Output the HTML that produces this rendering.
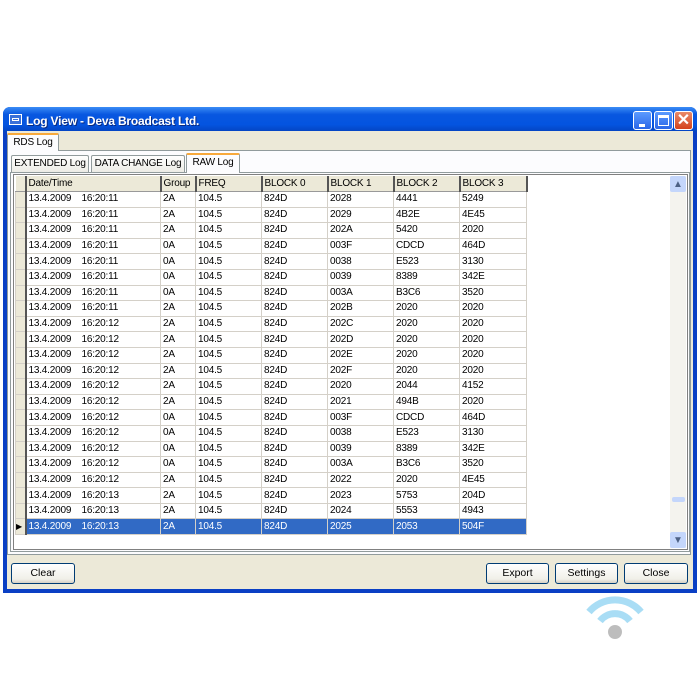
<!DOCTYPE html>
<html><head><style>
body{margin:0;width:700px;height:700px;background:#fff;position:relative;overflow:hidden;font-family:"Liberation Sans",sans-serif;font-size:11px;color:#000}
.a{position:absolute;box-sizing:border-box}
.win{left:3px;top:107px;width:694px;height:486px;background:#0a3fc4;border-radius:7px 7px 0 0}
.title{left:3px;top:107px;width:694px;height:25px;border-radius:7px 7px 0 0;background:linear-gradient(#3b8cf5,#0857e0 30%,#0454e0 70%,#0443c0)}
.body{left:7px;top:131px;width:686px;height:458px;background:#ece9d8}
.tb{color:#fff;font-weight:bold;font-size:12px;left:26px;top:114px;text-shadow:1px 1px #0a2a80;letter-spacing:-0.2px}
.btnw{top:111px;width:19px;height:19px;border:1px solid #fff;border-radius:3px;background:linear-gradient(#5b9bff,#2a66e8)}
.tab{border:1px solid #919b9c;border-bottom:none;background:linear-gradient(#fff,#ecebe5);text-align:center;padding-top:2px;border-radius:2px 2px 0 0;white-space:nowrap;font-size:10px;letter-spacing:-0.2px}
.sel{background:#fcfcfe;border-top:2px solid #f8a93b}
table{border-collapse:collapse;position:absolute;left:15px;top:176px;font-size:10px;table-layout:fixed;width:511px;letter-spacing:-0.2px}
td{border:1px solid #d4d0c8;height:14.6px;padding:0 0 0 2px;white-space:nowrap;line-height:14px;overflow:hidden}
th{background:#ece9d8;font-weight:normal;text-align:left;border-right:2px solid #555;border-bottom:1px solid #999;height:15px;padding:0 0 0 2px;line-height:15px;white-space:nowrap;overflow:hidden}
td.rh{background:#ece9d8;border-right:2px solid #555;padding:0}
tr.s td{background:#316ac5;color:#fff}
tr.s td.rh{background:#ece9d8;color:#000}
.b{top:563px;height:21px;border:1px solid #003c74;border-radius:3px;background:linear-gradient(#fff,#f0efe8 80%,#d6d0c5);text-align:center;line-height:19px;font-size:10.5px}
</style></head><body>
<div class="a win"></div>
<div class="a title"></div>
<div class="a body"></div>
<div class="a" style="left:9px;top:114px;width:13px;height:11px;border:1px solid #fff;background:#3a70d8"><div class="a" style="left:2px;top:3px;width:7px;height:3px;border:1px solid #fff"></div></div>
<div class="a tb">Log View - Deva Broadcast Ltd.</div>
<div class="a btnw" style="left:633px"><div class="a" style="left:5px;top:12px;width:6px;height:3px;background:#fff"></div></div>
<div class="a btnw" style="left:654px"><div class="a" style="left:3px;top:3px;width:11px;height:11px;border:1px solid #fff;border-top-width:3px"></div></div>
<div class="a btnw" style="left:674px;background:linear-gradient(#e88a6a,#d4421c);color:#fff;font-weight:bold;font-size:16px;text-align:center;line-height:17px">✕</div>
<div class="a" style="left:7px;top:150px;width:684px;height:405px;border:1px solid #919b9c;background:#fcfcfe"></div>
<div class="a tab sel" style="left:7px;top:133px;width:52px;height:18px">RDS Log</div>
<div class="a" style="left:10px;top:172px;width:680px;height:380px;border:1px solid #919b9c;background:#fcfcfe"></div>
<div class="a tab" style="left:11px;top:155px;width:78px;height:17px">EXTENDED Log</div>
<div class="a tab" style="left:91px;top:155px;width:94px;height:17px">DATA CHANGE Log</div>
<div class="a tab sel" style="left:186px;top:153px;width:54px;height:20px">RAW Log</div>
<div class="a" style="left:13px;top:174px;width:675px;height:376px;border:1px solid #808080;background:#fff"></div>
<div class="a" style="left:670px;top:176px;width:16px;height:372px;background:#f4f3ee"></div>
<div class="a" style="left:670px;top:176px;width:16px;height:16px;background:#c4d6fb;border-radius:2px;color:#4d6185;font-size:10px;text-align:center;line-height:17px">▲</div>
<div class="a" style="left:670px;top:532px;width:16px;height:16px;background:#c4d6fb;border-radius:2px;color:#4d6185;font-size:10px;text-align:center;line-height:17px">▼</div>
<div class="a" style="left:672px;top:497px;width:13px;height:5px;background:#c4d6fb;border-radius:2px"></div>
<table>
<colgroup><col style="width:10px"><col style="width:135px"><col style="width:35px"><col style="width:66px"><col style="width:66px"><col style="width:66px"><col style="width:66px"><col style="width:67px"></colgroup>
<tr><th style="padding:0"></th><th>Date/Time</th><th>Group</th><th>FREQ</th><th>BLOCK 0</th><th>BLOCK 1</th><th>BLOCK 2</th><th>BLOCK 3</th></tr>
<tr><td class="rh"></td><td>13.4.2009&nbsp;&nbsp;&nbsp;&nbsp;16:20:11</td><td>2A</td><td>104.5</td><td>824D</td><td>2028</td><td>4441</td><td>5249</td></tr>
<tr><td class="rh"></td><td>13.4.2009&nbsp;&nbsp;&nbsp;&nbsp;16:20:11</td><td>2A</td><td>104.5</td><td>824D</td><td>2029</td><td>4B2E</td><td>4E45</td></tr>
<tr><td class="rh"></td><td>13.4.2009&nbsp;&nbsp;&nbsp;&nbsp;16:20:11</td><td>2A</td><td>104.5</td><td>824D</td><td>202A</td><td>5420</td><td>2020</td></tr>
<tr><td class="rh"></td><td>13.4.2009&nbsp;&nbsp;&nbsp;&nbsp;16:20:11</td><td>0A</td><td>104.5</td><td>824D</td><td>003F</td><td>CDCD</td><td>464D</td></tr>
<tr><td class="rh"></td><td>13.4.2009&nbsp;&nbsp;&nbsp;&nbsp;16:20:11</td><td>0A</td><td>104.5</td><td>824D</td><td>0038</td><td>E523</td><td>3130</td></tr>
<tr><td class="rh"></td><td>13.4.2009&nbsp;&nbsp;&nbsp;&nbsp;16:20:11</td><td>0A</td><td>104.5</td><td>824D</td><td>0039</td><td>8389</td><td>342E</td></tr>
<tr><td class="rh"></td><td>13.4.2009&nbsp;&nbsp;&nbsp;&nbsp;16:20:11</td><td>0A</td><td>104.5</td><td>824D</td><td>003A</td><td>B3C6</td><td>3520</td></tr>
<tr><td class="rh"></td><td>13.4.2009&nbsp;&nbsp;&nbsp;&nbsp;16:20:11</td><td>2A</td><td>104.5</td><td>824D</td><td>202B</td><td>2020</td><td>2020</td></tr>
<tr><td class="rh"></td><td>13.4.2009&nbsp;&nbsp;&nbsp;&nbsp;16:20:12</td><td>2A</td><td>104.5</td><td>824D</td><td>202C</td><td>2020</td><td>2020</td></tr>
<tr><td class="rh"></td><td>13.4.2009&nbsp;&nbsp;&nbsp;&nbsp;16:20:12</td><td>2A</td><td>104.5</td><td>824D</td><td>202D</td><td>2020</td><td>2020</td></tr>
<tr><td class="rh"></td><td>13.4.2009&nbsp;&nbsp;&nbsp;&nbsp;16:20:12</td><td>2A</td><td>104.5</td><td>824D</td><td>202E</td><td>2020</td><td>2020</td></tr>
<tr><td class="rh"></td><td>13.4.2009&nbsp;&nbsp;&nbsp;&nbsp;16:20:12</td><td>2A</td><td>104.5</td><td>824D</td><td>202F</td><td>2020</td><td>2020</td></tr>
<tr><td class="rh"></td><td>13.4.2009&nbsp;&nbsp;&nbsp;&nbsp;16:20:12</td><td>2A</td><td>104.5</td><td>824D</td><td>2020</td><td>2044</td><td>4152</td></tr>
<tr><td class="rh"></td><td>13.4.2009&nbsp;&nbsp;&nbsp;&nbsp;16:20:12</td><td>2A</td><td>104.5</td><td>824D</td><td>2021</td><td>494B</td><td>2020</td></tr>
<tr><td class="rh"></td><td>13.4.2009&nbsp;&nbsp;&nbsp;&nbsp;16:20:12</td><td>0A</td><td>104.5</td><td>824D</td><td>003F</td><td>CDCD</td><td>464D</td></tr>
<tr><td class="rh"></td><td>13.4.2009&nbsp;&nbsp;&nbsp;&nbsp;16:20:12</td><td>0A</td><td>104.5</td><td>824D</td><td>0038</td><td>E523</td><td>3130</td></tr>
<tr><td class="rh"></td><td>13.4.2009&nbsp;&nbsp;&nbsp;&nbsp;16:20:12</td><td>0A</td><td>104.5</td><td>824D</td><td>0039</td><td>8389</td><td>342E</td></tr>
<tr><td class="rh"></td><td>13.4.2009&nbsp;&nbsp;&nbsp;&nbsp;16:20:12</td><td>0A</td><td>104.5</td><td>824D</td><td>003A</td><td>B3C6</td><td>3520</td></tr>
<tr><td class="rh"></td><td>13.4.2009&nbsp;&nbsp;&nbsp;&nbsp;16:20:12</td><td>2A</td><td>104.5</td><td>824D</td><td>2022</td><td>2020</td><td>4E45</td></tr>
<tr><td class="rh"></td><td>13.4.2009&nbsp;&nbsp;&nbsp;&nbsp;16:20:13</td><td>2A</td><td>104.5</td><td>824D</td><td>2023</td><td>5753</td><td>204D</td></tr>
<tr><td class="rh"></td><td>13.4.2009&nbsp;&nbsp;&nbsp;&nbsp;16:20:13</td><td>2A</td><td>104.5</td><td>824D</td><td>2024</td><td>5553</td><td>4943</td></tr>
<tr class="s"><td class="rh" style="font-size:8px">▶</td><td>13.4.2009&nbsp;&nbsp;&nbsp;&nbsp;16:20:13</td><td>2A</td><td>104.5</td><td>824D</td><td>2025</td><td>2053</td><td>504F</td></tr>
</table>
<div class="a b" style="left:11px;width:64px">Clear</div>
<div class="a b" style="left:486px;width:63px">Export</div>
<div class="a b" style="left:555px;width:63px">Settings</div>
<div class="a b" style="left:624px;width:64px">Close</div>
<svg class="a" style="left:580px;top:590px" width="70" height="60" viewBox="0 0 70 60">
<path d="M9 22 A34 34 0 0 1 61 22" fill="none" stroke="#a9ddf5" stroke-width="7"/>
<path d="M20 31 A19 19 0 0 1 50 31" fill="none" stroke="#a9ddf5" stroke-width="7"/>
<circle cx="35" cy="42" r="7" fill="#bdbdbd"/>
</svg>
</body></html>
